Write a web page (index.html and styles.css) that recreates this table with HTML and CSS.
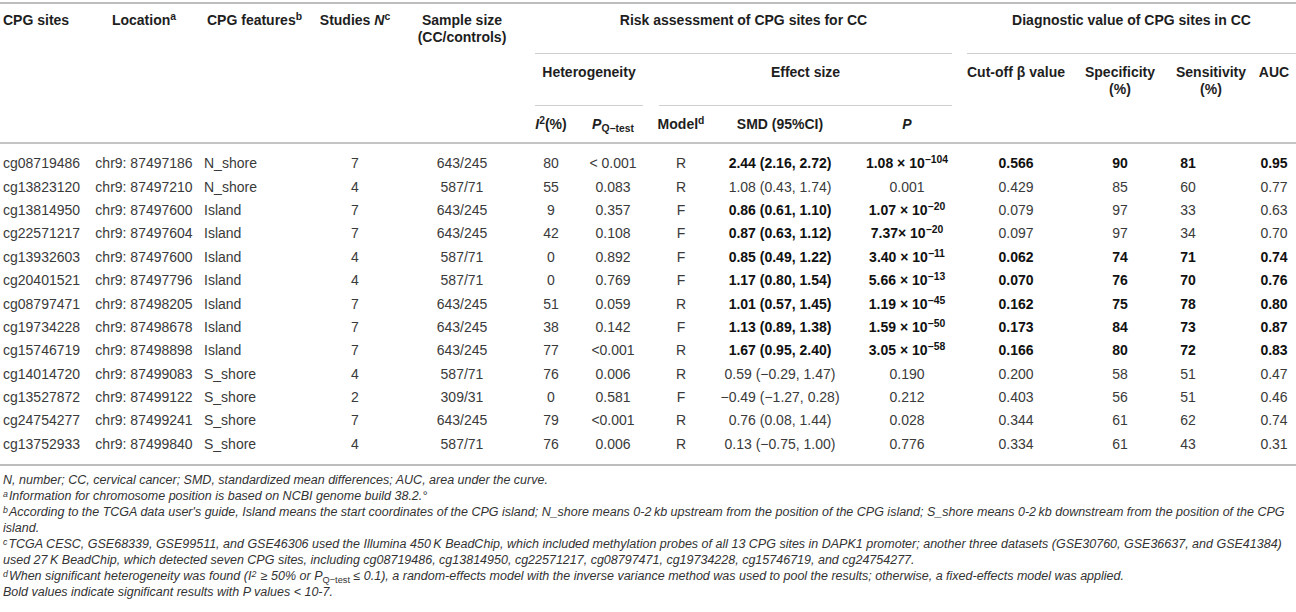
FILE: index.html
```html
<!DOCTYPE html>
<html>
<head>
<meta charset="utf-8">
<title>DAPK1 CPG sites</title>
<link rel="stylesheet" href="styles.css">
</head>
<body>
<div class="page">
<div class="tablewrap">
<table class="tbl">
<colgroup>
<col class="w1"><col class="w2"><col class="w3"><col class="w4"><col class="w5"><col class="w6"><col class="w7"><col class="w8"><col class="w9"><col class="w10"><col class="w11"><col class="w12"><col class="w13"><col class="w14">
</colgroup>
<thead>
<tr class="h1">
<th rowspan="3" class="l top">CPG sites</th>
<th rowspan="3" class="top">Location<sup>a</sup></th>
<th rowspan="3" class="f top">CPG features<sup>b</sup></th>
<th rowspan="3" class="top">Studies <i>N</i><sup>c</sup></th>
<th rowspan="3" class="top">Sample size<br>(CC/controls)</th>
<th colspan="5" class="grp"><div class="gl g1">Risk assessment of CPG sites for CC</div></th>
<th colspan="4" class="grp last"><div class="gl g1">Diagnostic value of CPG sites in CC</div></th>
</tr>
<tr class="h2">
<th colspan="2" class="grp het"><div class="gl g2">Heterogeneity</div></th>
<th colspan="3" class="grp"><div class="gl g2">Effect size</div></th>
<th rowspan="2" class="mid">Cut-off β value</th>
<th rowspan="2" class="mid">Specificity<br>(%)</th>
<th rowspan="2" class="mid">Sensitivity<br>(%)</th>
<th rowspan="2" class="mid">AUC</th>
</tr>
<tr class="h3">
<th class="sub"><i>I</i><sup class="s2">2</sup>(%)</th>
<th class="sub"><i>P</i><sub>Q−test</sub></th>
<th class="sub">Model<sup>d</sup></th>
<th class="sub">SMD (95%CI)</th>
<th class="sub"><i>P</i></th>
</tr>
</thead>
<tbody>
<tr class="first"><td class="l">cg08719486</td><td>chr9: 87497186</td><td class="f">N_shore</td><td>7</td><td>643/245</td><td>80</td><td>&lt; 0.001</td><td>R</td><td class="b">2.44 (2.16, 2.72)</td><td class="b">1.08 × 10<sup>−104</sup></td><td class="b">0.566</td><td class="b">90</td><td class="b sens">81</td><td class="b">0.95</td></tr>
<tr><td class="l">cg13823120</td><td>chr9: 87497210</td><td class="f">N_shore</td><td>4</td><td>587/71</td><td>55</td><td>0.083</td><td>R</td><td>1.08 (0.43, 1.74)</td><td>0.001</td><td>0.429</td><td>85</td><td class="sens">60</td><td>0.77</td></tr>
<tr><td class="l">cg13814950</td><td>chr9: 87497600</td><td class="f">Island</td><td>7</td><td>643/245</td><td>9</td><td>0.357</td><td>F</td><td class="b">0.86 (0.61, 1.10)</td><td class="b">1.07 × 10<sup>−20</sup></td><td>0.079</td><td>97</td><td class="sens">33</td><td>0.63</td></tr>
<tr><td class="l">cg22571217</td><td>chr9: 87497604</td><td class="f">Island</td><td>7</td><td>643/245</td><td>42</td><td>0.108</td><td>F</td><td class="b">0.87 (0.63, 1.12)</td><td class="b">7.37× 10<sup>−20</sup></td><td>0.097</td><td>97</td><td class="sens">34</td><td>0.70</td></tr>
<tr><td class="l">cg13932603</td><td>chr9: 87497600</td><td class="f">Island</td><td>4</td><td>587/71</td><td>0</td><td>0.892</td><td>F</td><td class="b">0.85 (0.49, 1.22)</td><td class="b">3.40 × 10<sup>−11</sup></td><td class="b">0.062</td><td class="b">74</td><td class="b sens">71</td><td class="b">0.74</td></tr>
<tr><td class="l">cg20401521</td><td>chr9: 87497796</td><td class="f">Island</td><td>4</td><td>587/71</td><td>0</td><td>0.769</td><td>F</td><td class="b">1.17 (0.80, 1.54)</td><td class="b">5.66 × 10<sup>−13</sup></td><td class="b">0.070</td><td class="b">76</td><td class="b sens">70</td><td class="b">0.76</td></tr>
<tr><td class="l">cg08797471</td><td>chr9: 87498205</td><td class="f">Island</td><td>7</td><td>643/245</td><td>51</td><td>0.059</td><td>R</td><td class="b">1.01 (0.57, 1.45)</td><td class="b">1.19 × 10<sup>−45</sup></td><td class="b">0.162</td><td class="b">75</td><td class="b sens">78</td><td class="b">0.80</td></tr>
<tr><td class="l">cg19734228</td><td>chr9: 87498678</td><td class="f">Island</td><td>7</td><td>643/245</td><td>38</td><td>0.142</td><td>F</td><td class="b">1.13 (0.89, 1.38)</td><td class="b">1.59 × 10<sup>−50</sup></td><td class="b">0.173</td><td class="b">84</td><td class="b sens">73</td><td class="b">0.87</td></tr>
<tr><td class="l">cg15746719</td><td>chr9: 87498898</td><td class="f">Island</td><td>7</td><td>643/245</td><td>77</td><td>&lt;0.001</td><td>R</td><td class="b">1.67 (0.95, 2.40)</td><td class="b">3.05 × 10<sup>−58</sup></td><td class="b">0.166</td><td class="b">80</td><td class="b sens">72</td><td class="b">0.83</td></tr>
<tr><td class="l">cg14014720</td><td>chr9: 87499083</td><td class="f">S_shore</td><td>4</td><td>587/71</td><td>76</td><td>0.006</td><td>R</td><td>0.59 (−0.29, 1.47)</td><td>0.190</td><td>0.200</td><td>58</td><td class="sens">51</td><td>0.47</td></tr>
<tr><td class="l">cg13527872</td><td>chr9: 87499122</td><td class="f">S_shore</td><td>2</td><td>309/31</td><td>0</td><td>0.581</td><td>F</td><td>−0.49 (−1.27, 0.28)</td><td>0.212</td><td>0.403</td><td>56</td><td class="sens">51</td><td>0.46</td></tr>
<tr><td class="l">cg24754277</td><td>chr9: 87499241</td><td class="f">S_shore</td><td>7</td><td>643/245</td><td>79</td><td>&lt;0.001</td><td>R</td><td>0.76 (0.08, 1.44)</td><td>0.028</td><td>0.344</td><td>61</td><td class="sens">62</td><td>0.74</td></tr>
<tr class="last"><td class="l">cg13752933</td><td>chr9: 87499840</td><td class="f">S_shore</td><td>4</td><td>587/71</td><td>76</td><td>0.006</td><td>R</td><td>0.13 (−0.75, 1.00)</td><td>0.776</td><td>0.334</td><td>61</td><td class="sens">43</td><td>0.31</td></tr>
</tbody>
</table>
</div>
<div class="notes">
<p><i>N</i>, number; CC, cervical cancer; SMD, standardized mean differences; AUC, area under the curve.</p>
<p><sup>a</sup>Information for chromosome position is based on NCBI genome build 38.2.°</p>
<p><sup>b</sup>According to the TCGA data user's guide, Island means the start coordinates of the CPG island; N_shore means 0-2&#8201;kb upstream from the position of the CPG island; S_shore means 0-2&#8201;kb downstream from the position of the CPG island.</p>
<p><sup>c</sup>TCGA CESC, GSE68339, GSE99511, and GSE46306 used the Illumina 450&#8201;K BeadChip, which included methylation probes of all 13 CPG sites in DAPK1 promoter; another three datasets (GSE30760, GSE36637, and GSE41384) used 27&#8201;K BeadChip, which detected seven CPG sites, including cg08719486, cg13814950, cg22571217, cg08797471, cg19734228, cg15746719, and cg24754277.</p>
<p><sup>d</sup>When significant heterogeneity was found (<i>I</i><sup>2</sup> ≥ 50% or P<sub>Q−test</sub> ≤ 0.1), a random-effects model with the inverse variance method was used to pool the results; otherwise, a fixed-effects model was applied.</p>
<p>Bold values indicate significant results with P values &lt; 10-7.</p>
</div>
</div>
</body>
</html>
```

FILE: styles.css
```css
html, body {
  margin: 0;
  padding: 0;
  background: #ffffff;
}
.page {
  width: 1296px;
  padding-top: 2px;
  font-family: "Liberation Sans", Arial, sans-serif;
  color: #333333;
}
.tablewrap {
  border-top: 2px solid #bdbdbd;
  border-bottom: 2px solid #bdbdbd;
}
.tbl {
  width: 1296px;
  table-layout: fixed;
  border-collapse: separate;
  border-spacing: 0;
  font-size: 14px;
}
.w1 { width: 90px; }
.w2 { width: 108px; }
.w3 { width: 118px; }
.w4 { width: 78px; }
.w5 { width: 136px; }
.w6 { width: 42px; }
.w7 { width: 82px; }
.w8 { width: 54px; }
.w9 { width: 144px; }
.w10 { width: 110px; }
.w11 { width: 108px; }
.w12 { width: 100px; }
.w13 { width: 82px; }
.w14 { width: 44px; }

th {
  font-weight: bold;
  color: #1e1e1e;
  text-align: center;
  vertical-align: top;
  padding: 0;
  line-height: 17px;
  white-space: nowrap;
}
th.l, td.l { text-align: left; padding-left: 3px; }
th.f { text-align: left; padding-left: 9px; }
td.f { text-align: left; padding-left: 6px; }
th.top {
  padding-top: 8px;
  border-bottom: 2px solid #c4c4c4;
}
th.mid {
  padding-top: 10px;
  border-bottom: 2px solid #c4c4c4;
}
th.sub {
  padding-top: 10px;
  height: 26px;
  border-bottom: 2px solid #c4c4c4;
  box-sizing: content-box;
}
.grp { padding: 0 10px 0 5px; }
.grp.last { padding-right: 0; }
.grp.het { padding-right: 11px; }
.gl {
  border-bottom: 1px solid #cfcfcf;
}
.g1 { padding-top: 8px; padding-bottom: 24px; }
.g2 { padding-top: 10px; padding-bottom: 24px; }

th sup, td sup {
  font-size: 0.74em;
  line-height: 0;
  vertical-align: 0.5em;
}
th sub, .notes sub {
  font-size: 0.74em;
  line-height: 0;
  vertical-align: -0.3em;
  font-style: normal;
}
.notes sup {
  font-size: 0.7em;
  line-height: 0;
  vertical-align: 0.3em;
  margin-right: 1px;
}

td {
  padding: 0;
  text-align: center;
  vertical-align: middle;
  height: 23.4px;
  line-height: 17px;
  white-space: nowrap;
  color: #3a3a3a;
}
td.b { font-weight: bold; color: #111111; }
td.sens { padding-right: 46px; }
tr.first td { padding-top: 8px; }
tr.last td { padding-bottom: 8px; }

.notes {
  padding: 6px 0 0 3px;
  font-family: "Liberation Sans Narrow", "Liberation Sans", Arial, sans-serif;
  font-style: italic;
  font-size: 12.5px;
  line-height: 16px;
  color: #333333;
}
.notes p {
  margin: 0;
}
.notes i { font-style: italic; }
```
